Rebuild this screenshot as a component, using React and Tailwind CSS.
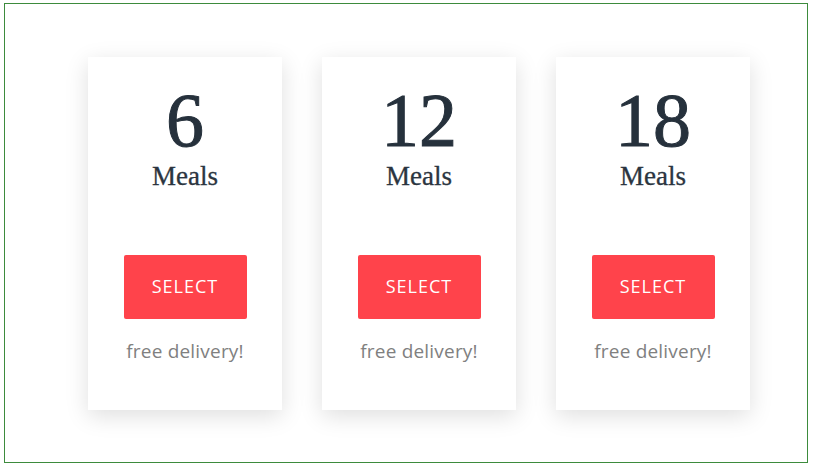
import React from 'react';

const plans = [6, 12, 18];

function PlanCard({ count }) {
  return (
    <div className="w-[194px] h-[353px] bg-white shadow-[0_6px_22px_rgba(0,0,0,0.13)] flex flex-col items-center pt-[22px]">
      <div className="text-[76px] leading-[1.1] text-[#26313c] [-webkit-text-stroke:1px_#26313c] font-['Liberation_Serif',serif]">
        {count}
      </div>
      <div className="text-[27px] leading-none text-[#2b3540] [-webkit-text-stroke:0.3px_#2b3540] font-['Liberation_Serif',serif]">
        Meals
      </div>
      <button className="mt-[65px] w-[123px] h-[64px] rounded-[2px] bg-[#ff434b] text-white text-[18px] tracking-[1px] font-medium font-['Open_Sans',sans-serif]">
        SELECT
      </button>
      <div className="mt-[18px] text-[19px] tracking-[0.2px] text-[#808080] font-['Open_Sans',sans-serif]">
        free delivery!
      </div>
    </div>
  );
}

export default function App() {
  return (
    <div className="w-[814px] h-[466px] bg-white pt-[3px] pl-[4px]">
      <div className="w-[804px] h-[460px] border border-solid border-[#3d8b3d] flex gap-[40px] pl-[83px] pt-[53px]">
        {plans.map((n) => (
          <PlanCard key={n} count={n} />
        ))}
      </div>
    </div>
  );
}
